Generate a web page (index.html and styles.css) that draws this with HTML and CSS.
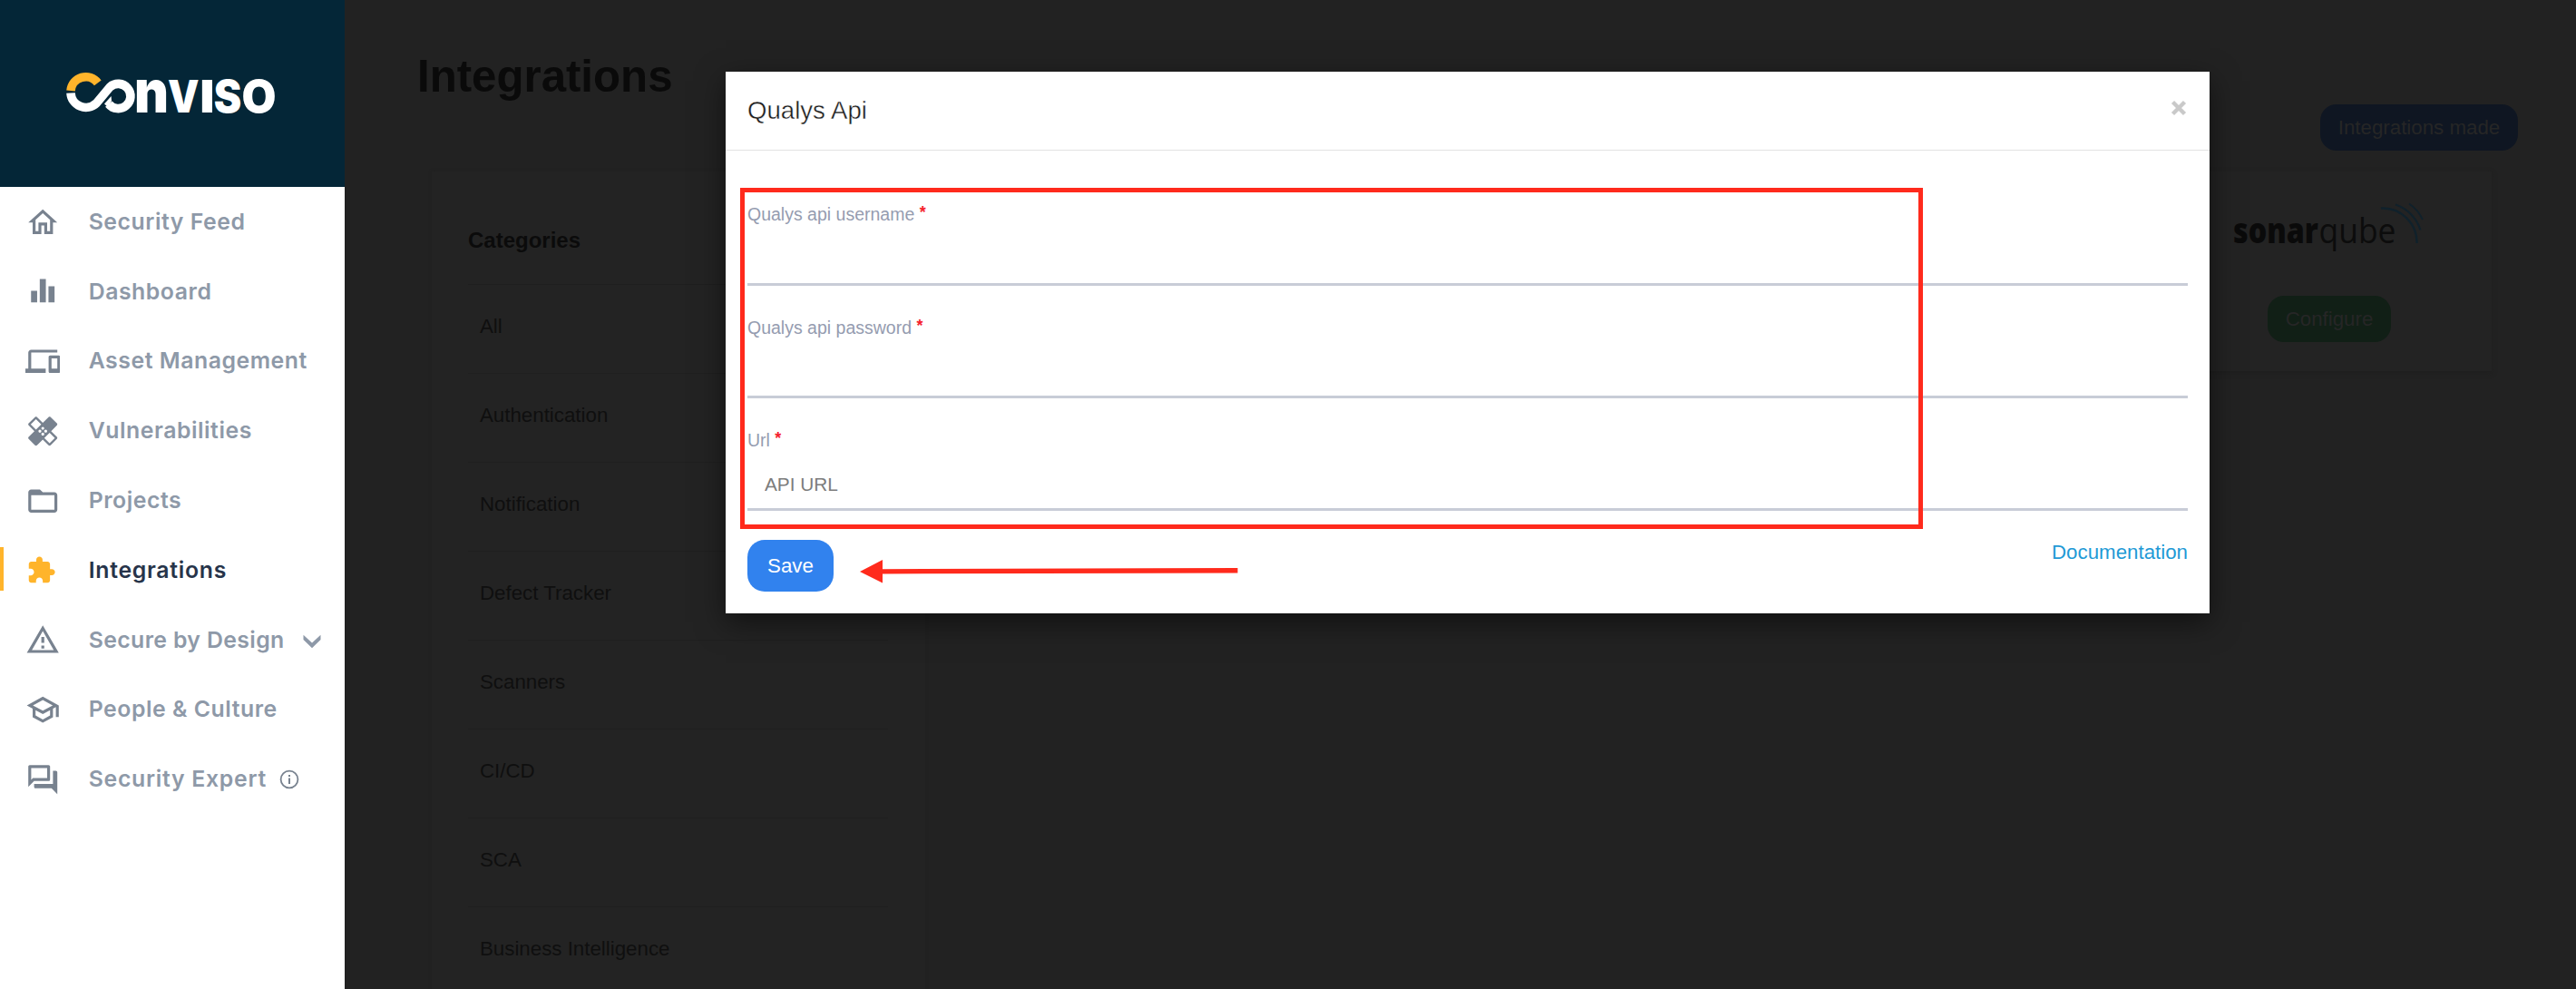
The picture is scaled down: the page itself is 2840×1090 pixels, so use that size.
FILE: index.html
```html
<!DOCTYPE html>
<html lang="en">
<head>
<meta charset="utf-8">
<title>Integrations</title>
<link rel="stylesheet" href="styles.css">
</head>
<body>
<div class="app">
  <aside class="sidebar">
    <div class="brand">
      <svg class="brand-logo" viewBox="60 50 260 100" width="260" height="100" aria-label="Conviso">
        <path d="M78 100A16.6 16.6 0 0 1 107.8 91.4" fill="none" stroke="#ffb42b" stroke-width="9.6"/>
        <path d="M78 102.4A16.8 16.8 0 0 0 106.3 113.8L121.3 95.8A13.6 13.6 0 1 1 119.8 114.6" fill="none" stroke="#fff" stroke-width="9.6"/>
        <path d="M115 114.5L122.6 106L123 111L119 118Z" fill="#fff"/>
        <g class="brand-text">
          <text x="148" y="124" font-size="66" textLength="38" lengthAdjust="spacingAndGlyphs">n</text>
          <text x="185" y="124" font-size="50" textLength="34.5" lengthAdjust="spacingAndGlyphs">V</text>
          <text x="220.3" y="124" font-size="50" textLength="16.400" lengthAdjust="spacingAndGlyphs">I</text>
          <text x="235.8" y="123.600" font-size="49" textLength="30.500" lengthAdjust="spacingAndGlyphs">S</text>
          <text x="266.500" y="123.600" font-size="49" textLength="38" lengthAdjust="spacingAndGlyphs">O</text>
        </g>
      </svg>
    </div>
    <nav class="menu">
      <a class="item"><svg class="icon" viewBox="0 0 24 24"><path d="M12 5.69l5 4.5V18h-2v-6H9v6H7v-7.81l5-4.5M12 3L2 12h3v8h6v-6h2v6h6v-8h3L12 3z"/></svg><span class="label">Security Feed</span></a>
      <a class="item"><svg class="icon" viewBox="0 0 24 24"><path d="M3.9 11.6h4.2v8H3.9zM9.9 3.5h4.2v16.1H9.9zM15.9 8.5h4.2v11.1h-4.2z"/></svg><span class="label">Dashboard</span></a>
      <a class="item"><svg class="icon" viewBox="0 0 24 24"><path d="M4 6h18V4H4c-1.1 0-2 .9-2 2v11H0v3h14v-3H4V6zm19 2h-6c-.55 0-1 .45-1 1v10c0 .55.45 1 1 1h6c.55 0 1-.45 1-1V9c0-.55-.45-1-1-1zm-1 9h-4v-7h4v7z"/></svg><span class="label">Asset Management</span></a>
      <a class="item"><svg class="icon" viewBox="0 0 24 24"><path d="M17.73 12.02l3.98-3.98c.39-.39.39-1.02 0-1.41l-4.34-4.34c-.39-.39-1.02-.39-1.41 0l-3.98 3.98L8 2.29C7.8 2.1 7.55 2 7.29 2c-.25 0-.51.1-.7.29L2.25 6.63c-.39.39-.39 1.02 0 1.41l3.98 3.98L2.25 16c-.39.39-.39 1.02 0 1.41l4.34 4.34c.39.39 1.02.39 1.41 0l3.98-3.98 3.98 3.98c.2.2.45.29.71.29.26 0 .51-.1.71-.29l4.34-4.34c.39-.39.39-1.02 0-1.41l-3.99-3.98zM12 9c.55 0 1 .45 1 1s-.45 1-1 1-1-.45-1-1 .45-1 1-1zm-4.71 1.96L3.66 7.34l3.63-3.63 3.62 3.62-3.62 3.63zM10 13c-.55 0-1-.45-1-1s.45-1 1-1 1 .45 1 1-.45 1-1 1zm2 2c-.55 0-1-.45-1-1s.45-1 1-1 1 .45 1 1-.45 1-1 1zm2-4c.55 0 1 .45 1 1s-.45 1-1 1-1-.45-1-1 .45-1 1-1zm2.66 9.34l-3.63-3.62 3.63-3.63 3.62 3.62-3.62 3.63z"/></svg><span class="label">Vulnerabilities</span></a>
      <a class="item"><svg class="icon" viewBox="0 0 24 24"><path d="M20 6h-8l-2-2H4c-1.1 0-1.99.9-1.99 2L2 18c0 1.1.9 2 2 2h16c1.1 0 2-.9 2-2V8c0-1.1-.9-2-2-2zm0 12H4V8h16v10z"/></svg><span class="label">Projects</span></a>
      <a class="item active"><svg class="icon puzzle" viewBox="0 0 24 24"><path d="M20.5 11H19V7c0-1.1-.9-2-2-2h-4V3.5C13 2.12 11.88 1 10.5 1S8 2.12 8 3.5V5H4c-1.1 0-1.99.9-1.99 2v3.8H3.5c1.49 0 2.7 1.21 2.7 2.7s-1.21 2.7-2.7 2.7H2V20c0 1.1.9 2 2 2h3.8v-1.5c0-1.49 1.21-2.7 2.7-2.7 1.49 0 2.7 1.21 2.7 2.7V22H17c1.1 0 2-.9 2-2v-4h1.5c1.38 0 2.5-1.12 2.5-2.5S21.88 11 20.5 11z"/></svg><span class="label wide">Integrations</span></a>
      <a class="item"><svg class="icon" viewBox="0 0 24 24"><path d="M12 5.99L19.53 19H4.47L12 5.99M12 2L1 21h22L12 2zm1 14h-2v2h2v-2zm0-6h-2v4h2v-4z"/></svg><span class="label narrow">Secure by Design</span><svg class="chevron" viewBox="0 0 20 16"><path d="M.5 .8L10 9.400 19.500 .8V6L10 15.300.5 6Z"/></svg></a>
      <a class="item"><svg class="icon" viewBox="0 0 24 24"><path d="M12 3L1 9l4 2.180v6L12 21l7-3.820v-6l2-1.090V17h2V9L12 3zm6.820 6L12 12.720 5.180 9 12 5.280 18.820 9zM17 15.990l-5 2.730-5-2.730v-3.720L12 15l5-2.730v3.720z"/></svg><span class="label">People &amp; Culture</span></a>
      <a class="item"><svg class="icon" viewBox="0 0 24 24"><path d="M15 4v7H5.170L4 12.170V4h11m1-2H3c-.55 0-1 .45-1 1v14l4-4h10c.55 0 1-.45 1-1V3c0-.55-.45-1-1-1zm5 4h-2v9H6v2c0 .55.45 1 1 1h11l4 4V7c0-.55-.45-1-1-1z"/></svg><span class="label wide">Security Expert</span><svg class="info" viewBox="0 0 22 22"><circle cx="11" cy="11" r="9.400" fill="none" stroke="#78828f" stroke-width="1.800"/><path d="M10 9.600h2v6.400h-2zM10 6h2v2h-2z"/></svg></a>
    </nav>
  </aside>

  <main class="main">
    <header class="page-head">
      <h1>Integrations</h1>
      <button class="btn btn-made">Integrations made</button>
    </header>
    <div class="content">
      <section class="categories">
        <h2>Categories</h2>
        <ul>
          <li>All</li>
          <li>Authentication</li>
          <li>Notification</li>
          <li>Defect Tracker</li>
          <li>Scanners</li>
          <li>CI/CD</li>
          <li>SCA</li>
          <li>Business Intelligence</li>
        </ul>
      </section>
      <section class="card">
        <svg class="sonar" viewBox="2460 220 216 62" width="216" height="62">
          <text class="sonar-bold" x="2462" y="268" textLength="94" lengthAdjust="spacingAndGlyphs">sonar</text>
          <text class="sonar-light" x="2556.500" y="268" textLength="85" lengthAdjust="spacingAndGlyphs">qube</text>
          <g fill="none" stroke="#10212b">
            <path d="M2625 229.500A37.500 38 0 0 1 2664.600 268" stroke-width="2.400"/>
            <path d="M2641 225.500A43 43 0 0 1 2668.500 253.500" stroke-width="2.200"/>
            <path d="M2656 224.500A44 44 0 0 1 2671 242" stroke-width="1.800"/>
          </g>
        </svg>
        <button class="btn btn-configure">Configure</button>
      </section>
    </div>
  </main>
</div>

<div class="modal" role="dialog">
  <div class="modal-head">
    <h3>Qualys Api</h3>
    <svg class="close" viewBox="0 0 18 18"><path d="M2.500 2.500L15.500 15.500M15.500 2.500L2.500 15.500"/></svg>
  </div>
  <form class="modal-body">
    <div class="field"><label>Qualys api username <sup>*</sup></label><input type="text"></div>
    <div class="field"><label>Qualys api password <sup>*</sup></label><input type="password"></div>
    <div class="field"><label>Url <sup>*</sup></label><input type="text" placeholder="API URL"></div>
    <div class="actions">
      <button class="btn btn-save" type="button">Save</button>
      <a class="doc">Documentation</a>
    </div>
  </form>
</div>

<div class="highlight"></div>
<svg class="arrow" viewBox="946 614 420 32"><path d="M948 630L973 617V627.200L1364.500 626V631.500L973 632.400V642.500Z" fill="#ff2a1c"/></svg>
</body>
</html>
```
FILE: styles.css
```css
* { box-sizing: border-box; }

body {
  margin: 0;
  width: 2840px;
  height: 1090px;
  overflow: hidden;
  position: relative;
  background: #222;
  font-family: "Liberation Sans", Arial, sans-serif;
}

h1, h2, h3, ul { margin: 0; padding: 0; }
ul { list-style: none; }

.app { display: flex; height: 1090px; }

/* Sidebar */
.sidebar { width: 380px; flex: none; background: #fff; }

.brand {
  height: 206px;
  padding: 50px 0 0 60px;
  background: #042637;
}
.brand-logo { display: block; }
.brand-text { font-family: Inter, sans-serif; font-weight: 900; fill: #fff; }

.menu { padding-top: .4px; }

.item {
  display: flex;
  align-items: center;
  height: 76.8px;
  padding-left: 27.8px;
  color: #8e99a8;
  font: 600 24.8px/30px Inter, sans-serif;
  white-space: nowrap;
}
.icon { width: 38.4px; height: 38.4px; flex: none; margin-right: 31.5px; fill: #78828f; }
.label { padding-bottom: 2px; letter-spacing: .55px; }
.label.wide { letter-spacing: .72px; }
.label.narrow { letter-spacing: .38px; }
.active {
  color: #27344a;
  background: linear-gradient(#ffb42b, #ffb42b) no-repeat 0 13px / 4px 48px;
}
.active .puzzle { width: 33px; height: 33px; margin: 0 35.2px 0 1.7px; fill: #ffb42b; }
.chevron { width: 20px; height: 16px; margin: 2px 0 0 20.5px; fill: #8e99a8; }
.info { width: 22px; height: 22px; margin-left: 14.5px; fill: #78828f; }

/* Page behind the dialog */
.main { flex: 1; min-width: 0; overflow: hidden; }

.page-head {
  display: flex;
  justify-content: space-between;
  align-items: flex-end;
  height: 166px;
  padding: 56px 64px 0 80px;
}
.page-head h1 {
  align-self: flex-start;
  font-size: 49.2px;
  line-height: 56px;
  color: #0a0a0a;
}

.btn {
  border: 0;
  padding: 0;
  font: 22.3px "Liberation Sans", Arial, sans-serif;
  color: #262626;
  border-radius: 18px;
}
.btn-made { width: 218px; height: 51px; background: #0f1622; }

.content {
  display: flex;
  justify-content: space-between;
  align-items: flex-start;
  padding: 23px 93px 0 96px;
}

.categories {
  width: 544px;
  height: 930px;
  padding: 0 41px 0 40px;
  background: #232323;
  box-shadow: 0 0 3px #202020;
}
.categories h2 {
  height: 124px;
  padding-top: 62px;
  font-size: 24px;
  line-height: 28px;
  color: #0b0b0b;
}
.categories li {
  height: 98px;
  padding: 0 0 6px 13px;
  border-top: 1px solid #1f1f1f;
  font-size: 22.3px;
  line-height: 91px;
  color: #0f0f0f;
}

.card {
  display: flex;
  flex-direction: column;
  align-items: center;
  width: 358px;
  height: 220px;
  padding-top: 31px;
  background: #232323;
  box-shadow: 0 2px 5px #1f1f1f;
}
.sonar { display: block; }
.sonar text { font-family: "Open Sans", sans-serif; font-size: 39px; }
.sonar-bold { font-weight: 800; fill: #0a0a0a; }
.sonar-light { font-weight: 400; fill: #0c0c0c; }
.btn-configure { width: 136px; height: 51px; margin-top: 44px; background: #111f16; }

/* Dialog */
.modal {
  position: absolute;
  left: 800px;
  top: 79px;
  width: 1636px;
  height: 597px;
  background: #fff;
  box-shadow: 0 10px 30px rgba(0, 0, 0, .5);
}
.modal-head {
  display: flex;
  justify-content: space-between;
  height: 87px;
  padding: 27px 25px 0 24px;
  border-bottom: 1px solid #e3e3e3;
}
.modal-head h3 {
  font-size: 27.6px;
  font-weight: 400;
  line-height: 32px;
  color: #1c1c1c;
  -webkit-text-stroke: .4px #fff;
}
.close { width: 18px; height: 18px; margin-top: 4px; fill: none; stroke: #c9c9c9; stroke-width: 4.4; }

.modal-body { padding: 25px 24px 0; }
.field { height: 124px; padding-top: 34px; }
.field:first-child { padding-top: 33px; }
.field:first-child input { margin-top: 1px; }
.field label {
  display: block;
  height: 24px;
  font-size: 19.5px;
  line-height: 24px;
  color: #959cb0;
}
.field sup {
  font-size: 18px;
  font-weight: 700;
  line-height: 0;
  vertical-align: 3px;
  color: #f5222d;
}
.field input {
  display: block;
  width: 100%;
  height: 66px;
  padding: 11px 19px 0;
  border: 0;
  border-bottom: 3px solid #c8ccd7;
  background: transparent;
  font: 20.8px "Liberation Sans", Arial, sans-serif;
}
.field input::placeholder { color: #7c7c7c; }

.actions { display: flex; justify-content: space-between; align-items: flex-start; padding-top: 32px; }
.btn-save { width: 95px; height: 57px; border-radius: 19px; background: #3182ee; color: #fff; }
.doc { padding-top: 1px; font-size: 22.3px; line-height: 26px; color: #1f9ad6; }

/* Markup over the dialog */
.highlight {
  position: absolute;
  left: 816px;
  top: 207px;
  width: 1304px;
  height: 376px;
  border: 5px solid #ff2a1c;
}
.arrow { position: absolute; left: 946px; top: 614px; width: 420px; height: 32px; }
```
